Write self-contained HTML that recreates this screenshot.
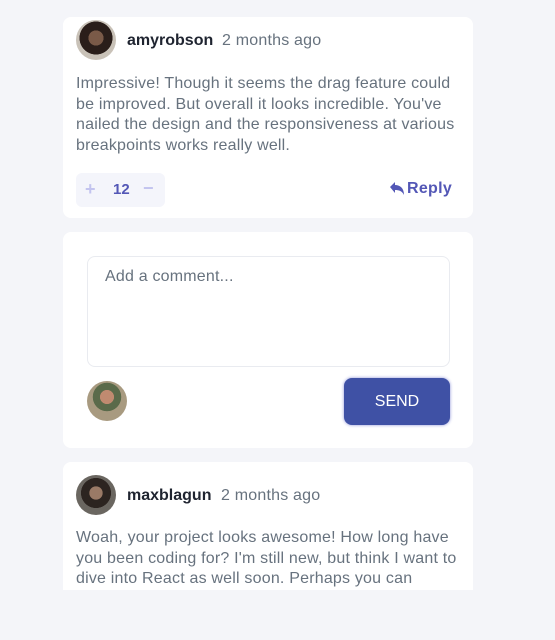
<!DOCTYPE html>
<html><head><style>
*{box-sizing:border-box;margin:0;padding:0}
body{width:555px;height:640px;background:#f4f5f9;font-family:"Liberation Sans",sans-serif;position:relative;overflow:hidden}
.card{position:absolute;left:63px;width:410px;background:#fff;border-radius:8px}
.av{position:absolute;width:40px;height:40px;border-radius:50%}
.name{position:absolute;font-weight:bold;font-size:16px;color:#1f2430}
.time{position:absolute;font-size:16px;color:#67727e;letter-spacing:0.2px}
.txt{position:absolute;left:13px;width:384px;font-size:16px;line-height:20.7px;color:#67727e;letter-spacing:0.2px}
</style></head><body>
<div class="card" style="top:17px;height:201px">
 <div class="av" style="left:13px;top:3px;background:radial-gradient(circle at 50% 45%,#7a5a48 0 25%,#2a1e1a 26% 55%,#c9c2b8 56%)"></div>
 <div class="name" style="left:64px;top:15px">amyrobson</div>
 <div class="time" style="left:159px;top:15px">2 months ago</div>
 <div class="txt" style="top:57px">Impressive! Though it seems the drag feature could be improved. But overall it looks incredible. You've nailed the design and the responsiveness at various breakpoints works really well.</div>
 <div style="position:absolute;left:13px;top:156px;width:89px;height:34px;background:#f4f5fb;border-radius:6px">
  <span style="position:absolute;left:9px;top:6px;color:#c3c4ef;font-size:18px;font-weight:bold">+</span>
  <span style="position:absolute;left:37px;top:8px;color:#5357b6;font-size:15px;font-weight:bold">12</span>
  <span style="position:absolute;left:67px;top:5px;color:#c3c4ef;font-size:18px;font-weight:bold">−</span>
 </div>
 <svg style="position:absolute;left:327px;top:165px" width="14" height="13" viewBox="0 0 14 13"><path d="M0 5L5 0v3c5 0 9 3 9 10-2-4-5-5-9-5v3z" fill="#5357b6"/></svg>
 <div style="position:absolute;left:344px;top:163px;color:#5357b6;font-weight:bold;font-size:16px;letter-spacing:0.3px">Reply</div>
</div>
<div class="card" style="top:232px;height:216px">
 <div style="position:absolute;left:24px;top:24px;width:363px;height:111px;border:1px solid #e9ebf0;border-radius:8px;padding:11px 17px;color:#67727e;font-size:16px;letter-spacing:0.2px">Add a comment...</div>
 <div class="av" style="left:24px;top:149px;background:radial-gradient(circle at 50% 40%,#c08a70 0 22%,#5a6a4a 23% 45%,#a89a80 46%)"></div>
 <div style="position:absolute;left:281px;top:146px;width:106px;height:47px;background:#3f51a5;border-radius:8px;box-shadow:0 0 3px #8a90d8;color:#fff;font-size:16px;text-align:center;line-height:47px">SEND</div>
</div>
<div class="card" style="top:462px;height:128px;border-radius:8px 8px 0 0">
 <div class="av" style="left:13px;top:13px;background:radial-gradient(circle at 50% 45%,#9a7a66 0 22%,#2c2420 23% 50%,#6a6660 51%)"></div>
 <div class="name" style="left:64px;top:25px">maxblagun</div>
 <div class="time" style="left:158px;top:25px">2 months ago</div>
 <div class="txt" style="top:66px">Woah, your project looks awesome! How long have you been coding for? I'm still new, but think I want to dive into React as well soon. Perhaps you can</div>
</div>
</body></html>
